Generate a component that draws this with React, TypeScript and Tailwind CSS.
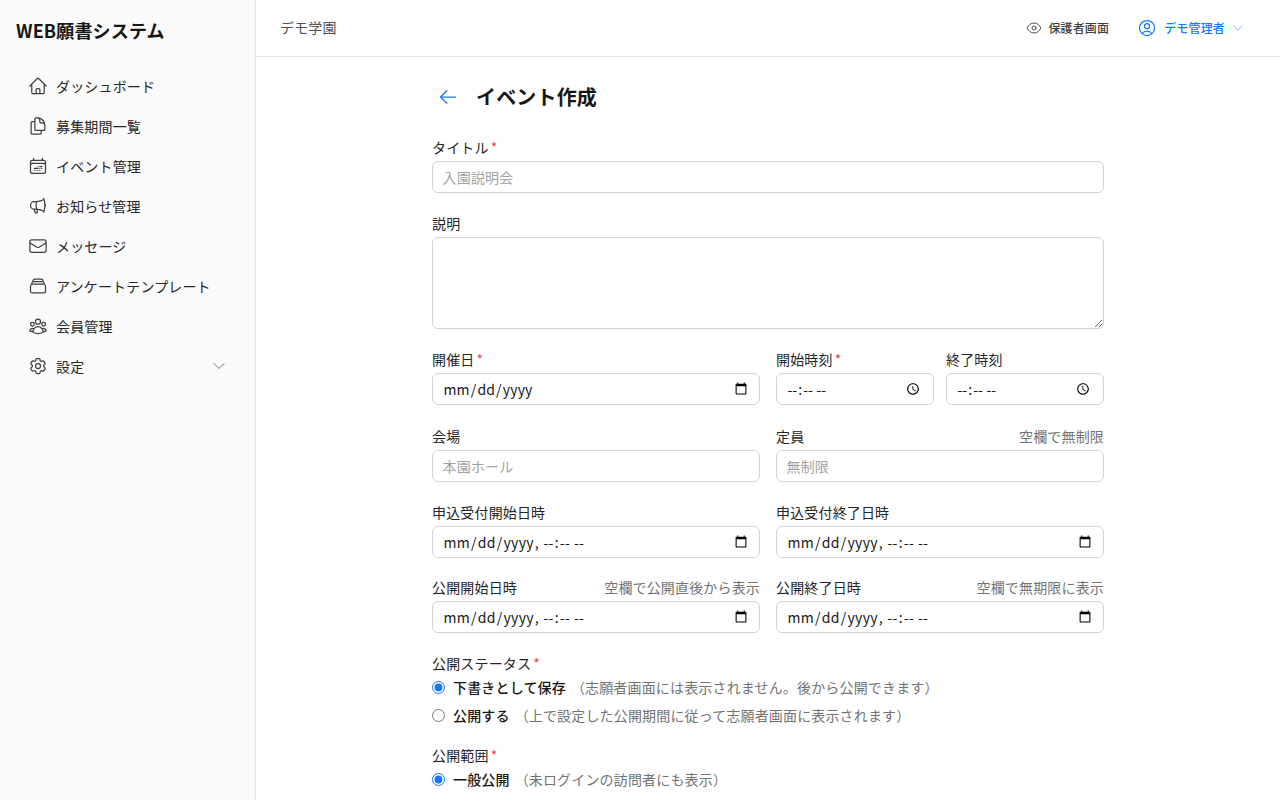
import type { ReactNode } from 'react'
import {
  HiOutlineHome,
  HiOutlineDocumentDuplicate,
  HiOutlineCalendarDateRange,
  HiOutlineMegaphone,
  HiOutlineEnvelope,
  HiOutlineRectangleStack,
  HiOutlineUserGroup,
  HiOutlineCog6Tooth,
  HiOutlineChevronDown,
  HiOutlineEye,
  HiOutlineUserCircle,
  HiOutlineArrowLeft,
} from 'react-icons/hi2'

const menuItems = [
  { name: 'ダッシュボード', icon: HiOutlineHome },
  { name: '募集期間一覧', icon: HiOutlineDocumentDuplicate },
  { name: 'イベント管理', icon: HiOutlineCalendarDateRange },
  { name: 'お知らせ管理', icon: HiOutlineMegaphone },
  { name: 'メッセージ', icon: HiOutlineEnvelope },
  { name: 'アンケートテンプレート', icon: HiOutlineRectangleStack },
  { name: '会員管理', icon: HiOutlineUserGroup },
  { name: '設定', icon: HiOutlineCog6Tooth, hasChildren: true },
]

const inputClass =
  'block w-full h-8 rounded-md border border-[#d4d4d4] bg-white px-[9.5px] text-sm text-[#171717] placeholder:text-[#a3a3a3] outline-none'

const Label = ({ text, required, hint }: { text: string; required?: boolean; hint?: string }) => (
  <div className="flex items-center justify-between h-5 mb-1">
    <span className="text-sm font-normal text-[#262626]">
      {text}
      {required && <span className="text-[#ef4444] ml-0.5">*</span>}
    </span>
    {hint && <span className="text-sm text-[#737373]">{hint}</span>}
  </div>
)

const Field = ({ children, ...label }: { children: ReactNode; text: string; required?: boolean; hint?: string }) => (
  <div>
    <Label {...label} />
    {children}
  </div>
)

const RadioRow = ({ name, label, note, checked }: { name: string; label: string; note: string; checked?: boolean }) => (
  <label className="flex items-center h-7 text-sm">
    <input type="radio" name={name} defaultChecked={checked} className="w-[13px] h-[13px] m-0 accent-[#1677ff]" />
    <span className="ml-2 font-medium text-[#171717]">{label}</span>
    <span className="ml-[5px] text-[#737373]">{note}</span>
  </label>
)

const App = () => {
  return (
    <div className="h-screen flex overflow-hidden bg-white antialiased tracking-[0.01em] font-['Noto_Sans_CJK_JP','Noto_Sans',sans-serif]">
      {/* Sidebar */}
      <aside className="w-64 shrink-0 bg-[#fafafa] border-r border-[#e5e5e5] flex flex-col">
        <div className="h-[60px] flex items-center px-4 text-lg font-bold text-[#171717]">WEB願書システム</div>
        <nav className="px-2 pt-1.5">
          {menuItems.map((item) => (
            <a key={item.name} className="flex items-center h-10 pl-5 pr-5 text-sm font-normal text-[#262626]">
              <item.icon className="w-5 h-5 shrink-0 mr-2 text-[#404040]" />
              <span className="flex-1">{item.name}</span>
              {item.hasChildren && <HiOutlineChevronDown className="w-4 h-4 text-[#737373]" />}
            </a>
          ))}
        </nav>
      </aside>

      {/* Main Content */}
      <div className="flex-1 min-w-0 flex flex-col">
        <header className="h-[57px] shrink-0 border-b border-[#e5e5e5] flex items-center justify-between pl-6 pr-[35px]">
          <span className="mb-0.5 text-sm text-[#525252]">デモ学園</span>
          <div className="flex items-center">
            <a className="flex items-center text-xs font-medium text-[#404040]">
              <HiOutlineEye className="w-4 h-4 mr-1.5 text-[#525252]" />
              保護者画面
            </a>
            <a className="flex items-center ml-7 text-xs font-medium text-[#1677ff]">
              <HiOutlineUserCircle className="w-5 h-5 mr-[7px]" />
              デモ管理者
              <HiOutlineChevronDown className="w-3.5 h-3.5 ml-1.5 text-[#69a8ff]" />
            </a>
          </div>
        </header>

        <main className="flex-1 overflow-hidden">
          <div className="w-[672px] mx-auto pt-6">
            <div className="flex items-center h-8 mb-6">
              <HiOutlineArrowLeft className="w-5 h-5 ml-1.5 text-[#1677ff]" />
              <h1 className="ml-[18px] text-xl font-bold text-[#171717]">イベント作成</h1>
            </div>

            <form className="flex flex-col gap-5">
              <Field text="タイトル" required>
                <input className={inputClass} placeholder="入園説明会" />
              </Field>
              <Field text="説明">
                <textarea className="block w-full h-[92px] rounded-md border border-[#d4d4d4] bg-white px-2.5 py-1.5 text-sm outline-none" />
              </Field>

              <div className="grid grid-cols-2 gap-4">
                <Field text="開催日" required>
                  <input type="date" className={inputClass} />
                </Field>
                <div className="grid grid-cols-2 gap-3">
                  <Field text="開始時刻" required>
                    <input type="time" className={`${inputClass} tracking-[0.04em]`} />
                  </Field>
                  <Field text="終了時刻">
                    <input type="time" className={`${inputClass} tracking-[0.04em]`} />
                  </Field>
                </div>
              </div>

              <div className="grid grid-cols-2 gap-4 mt-px">
                <Field text="会場">
                  <input className={inputClass} placeholder="本園ホール" />
                </Field>
                <Field text="定員" hint="空欄で無制限">
                  <input className={inputClass} placeholder="無制限" />
                </Field>
              </div>

              <div className="grid grid-cols-2 gap-4">
                <Field text="申込受付開始日時">
                  <input type="datetime-local" className={`${inputClass} tracking-[0.02em]`} />
                </Field>
                <Field text="申込受付終了日時">
                  <input type="datetime-local" className={`${inputClass} tracking-[0.02em]`} />
                </Field>
              </div>

              <div className="grid grid-cols-2 gap-4 -mt-px">
                <Field text="公開開始日時" hint="空欄で公開直後から表示">
                  <input type="datetime-local" className={`${inputClass} tracking-[0.02em]`} />
                </Field>
                <Field text="公開終了日時" hint="空欄で無期限に表示">
                  <input type="datetime-local" className={`${inputClass} tracking-[0.02em]`} />
                </Field>
              </div>

              <div>
                <div className="flex items-center h-5 text-sm font-normal text-[#262626]">
                  公開ステータス<span className="text-[#ef4444] ml-0.5">*</span>
                </div>
                <RadioRow name="status" label="下書きとして保存" note="（志願者画面には表示されません。後から公開できます）" checked />
                <RadioRow name="status" label="公開する" note="（上で設定した公開期間に従って志願者画面に表示されます）" />
              </div>

              <div className="-mt-1">
                <div className="flex items-center h-5 text-sm font-normal text-[#262626]">
                  公開範囲<span className="text-[#ef4444] ml-0.5">*</span>
                </div>
                <RadioRow name="scope" label="一般公開" note="（未ログインの訪問者にも表示）" checked />
              </div>
            </form>
          </div>
        </main>
      </div>
    </div>
  )
}

export default App
